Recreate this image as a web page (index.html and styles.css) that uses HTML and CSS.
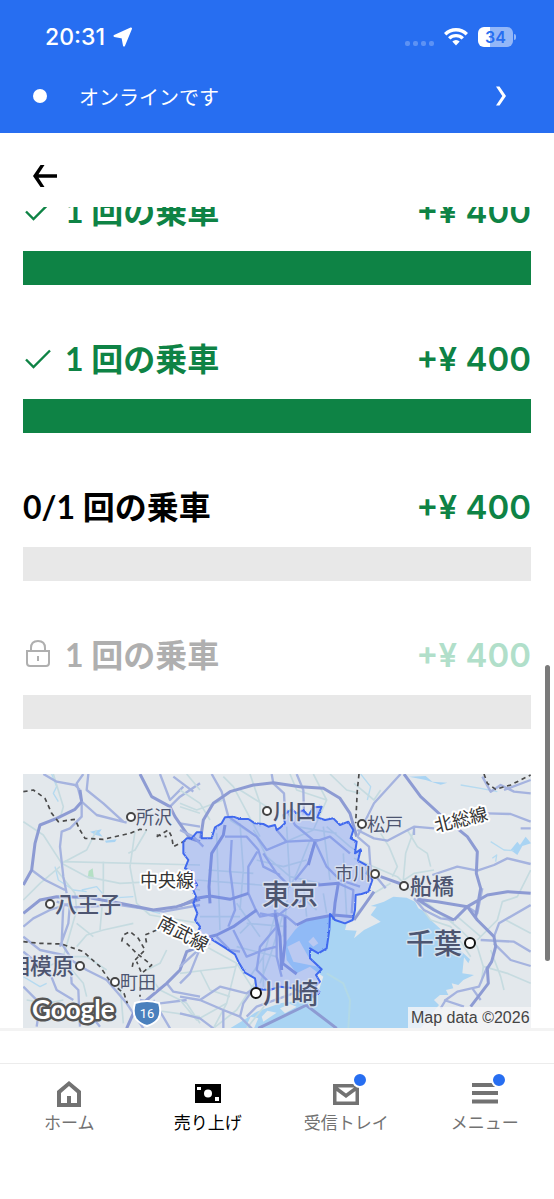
FILE: index.html
```html
<!DOCTYPE html>
<html lang="ja">
<head>
  <meta charset="UTF-8">
  <meta name="viewport" content="width=device-width, initial-scale=1">
  <title>売り上げ</title>
  <link rel="stylesheet" href="styles.css">
</head>
<body>

  <header class="header">
    <div class="status-bar">
      <div class="status-left">
        <span>20:31</span>
        <svg width="20" height="20" viewBox="0 0 20 20"><path d="M18 1.500 L11 18.500 L9.500 10.500 L1.500 9 Z" fill="#fff" stroke="#fff" stroke-width="2" stroke-linejoin="round"/></svg>
      </div>
      <div class="status-right">
        <span class="signal"><i></i><i></i><i></i><i></i></span>
        <svg width="24" height="18" viewBox="0 0 24 18">
          <g fill="none" stroke="#fff" stroke-width="3.400">
            <path d="M1.200 6.200 A15.500 15.500 0 0 1 22.800 6.200"/>
            <path d="M5.200 10.400 A9.800 9.800 0 0 1 18.800 10.400"/>
          </g>
          <path d="M8.300 13.600 A5.300 5.300 0 0 1 15.700 13.600 L12 17.400 Z" fill="#fff"/>
        </svg>
        <span class="battery">34</span>
      </div>
    </div>
    <button type="button" class="online">
      <span class="online-dot"></span>
      <span class="online-text">オンラインです</span>
      <svg width="12" height="20" viewBox="0 0 12 20"><path d="M1 0.500 H4.500 L11 10 L4.500 19.500 H1 L7.300 10 Z" fill="#fff"/></svg>
    </button>
  </header>

  <div class="app-bar">
    <button type="button" class="back-btn" aria-label="戻る">
      <svg width="26" height="26" viewBox="0 0 26 26"><path d="M8.500 2 H12.500 L6.500 11.300 H25 V14.700 H6.500 L12.500 24 H8.500 L1 13 Z"/></svg>
    </button>
  </div>

  <main class="content">
    <ul class="steps">
      <li class="step done">
        <div class="step-row">
          <svg class="step-icon" width="26" height="26" viewBox="0 0 26 26"><path d="M1 13.500 L8.500 21 L25 4.500" fill="none" stroke="currentColor" stroke-width="2.400"/></svg>
          <span class="step-title">1 回の乗車</span>
          <span class="amount">+¥ 400</span>
        </div>
        <div class="bar"></div>
      </li>
      <li class="step done">
        <div class="step-row">
          <svg class="step-icon" width="26" height="26" viewBox="0 0 26 26"><path d="M1 13.500 L8.500 21 L25 4.500" fill="none" stroke="currentColor" stroke-width="2.400"/></svg>
          <span class="step-title">1 回の乗車</span>
          <span class="amount">+¥ 400</span>
        </div>
        <div class="bar"></div>
      </li>
      <li class="step">
        <div class="step-row">
          <span class="step-title">0/1 回の乗車</span>
          <span class="amount">+¥ 400</span>
        </div>
        <div class="bar"></div>
      </li>
      <li class="step locked">
        <div class="step-row">
          <svg class="step-icon" width="26" height="30" viewBox="0 0 26 30">
            <g fill="none" stroke="currentColor" stroke-width="2">
              <path d="M2 11 H24 V23 Q24 26 21 26 H5 Q2 26 2 23 Z"/>
              <path d="M6 11 V8 Q6 1 13 1 Q20 1 20 8 V11"/>
            </g>
            <path d="M12 16 h2 v5 h-2z" fill="currentColor"/>
          </svg>
          <span class="step-title">1 回の乗車</span>
          <span class="amount">+¥ 400</span>
        </div>
        <div class="bar"></div>
      </li>
    </ul>

    <div class="map-wrap">
      <svg class="map" viewBox="0 0 508 254" role="img" aria-label="東京の地図">
        <defs>
          <filter id="rough" x="-5%" y="-5%" width="110%" height="110%">
            <feTurbulence type="fractalNoise" baseFrequency="0.15" numOctaves="2" seed="4"/>
            <feDisplacementMap in="SourceGraphic" scale="6" xChannelSelector="R" yChannelSelector="G"/>
          </filter>
        </defs>
        <rect class="land" width="508" height="254"/>

        <g transform="scale(0.33333)">
          <!-- bay -->
          <g transform="translate(471 -12)">
            <path class="water" d="M150 775 L200 745 230 725 300 700 370 690 410 680 430 620 390 590 350 610 320 570 315 520 345 480 370 455 440 438 500 462 495 480 530 482 522 505 552 480 602 455 572 435 590 410 572 408 612 395 640 380 680 383 705 395 715 415 735 425 752 450 785 480 812 505 832 535 850 550 870 568 865 580 852 562 847 610 882 615 850 630 835 645 815 640 820 655 798 660 805 675 780 675 762 690 777 705 760 725 722 775 Z"/>
            <path class="land" d="M322 530 L358 512 385 560 415 590 340 575 Z M385 515 L400 500 415 520 400 530 Z M200 765 L212 740 235 745 222 775 Z M245 740 L262 722 290 728 250 755 Z M300 715 L330 702 350 710 315 730 Z"/>
            <path class="sea-route" d="M440 610 L490 640 510 690 505 775"/>
          </g>

          <!-- west -->
          <g transform="translate(-9 -12)">
            <path class="lake" d="M210 185 L245 178 238 188 248 200 225 194 214 208 222 192 Z M255 212 L290 208 285 216 258 218 Z"/>
            <path class="river" d="M95 12 L110 50 100 70 115 95 M105 290 L115 330 160 360 200 365 M10 620 L60 650 80 640 M185 360 L230 350 260 385 340 380 M340 410 L420 430"/>
            <path class="park" d="M203 325 L206 303 218 295 222 328 Z"/>
            <path class="road-minor" d="M100 12 L130 110 120 145 M10 155 L70 195 125 280 200 320 300 340 400 335 540 360 M125 280 L200 240 230 180 M130 275 L540 285 M345 185 L330 290 350 400 390 435 540 460 M380 180 L345 240 325 250 M10 390 L60 340 120 290 M170 530 L200 495 250 480 340 460 M250 275 V365 L240 480 M110 300 L165 370 170 420 130 560 M130 560 L200 560 260 600 M300 640 L310 760 M480 110 L540 130 M10 600 L80 590 130 570 L190 640 200 680 M20 690 L80 700 130 690 M390 620 L420 660 500 700 540 760 M440 540 L420 580 380 600 M350 750 L400 720 540 740 M170 460 L220 500"/>
            <path class="road" d="M70 12 L110 35 165 45 180 60 M190 12 L170 40 185 95 230 135 320 158 M205 12 L200 60 250 100 310 155 M185 95 L185 140 150 175 125 185 120 230 130 320 140 370 M35 300 L75 330 135 360 M110 395 L160 412 300 405 430 425 540 405 M10 470 L40 445 90 420 150 400 M130 400 L125 520 150 560 155 640 175 660 180 770 M420 12 L450 90 490 50 M450 110 L480 80 540 40 M460 20 L520 65 M10 500 L60 540 130 555 200 600 260 630 320 700 370 775 M10 545 L90 610 110 660 160 690 M440 640 L460 665 540 680 M150 400 L145 460 120 530 M10 650 L60 700 50 770 M200 720 L240 770 M400 690 L450 775 M480 160 L540 170 M360 690 L420 700 500 690"/>
            <path class="road-major" d="M185 95 L165 118 110 145 60 165 45 220 35 300 10 345 M180 60 L185 95 M10 430 L60 390 110 380 200 382 300 400 400 420 470 410 540 388 M360 12 L395 80 450 110 465 140 510 205 540 215 M540 530 L500 545 480 600 440 640 380 690 340 730 320 775"/>
            <path class="border" d="M10 65 L40 60 75 85 95 130 115 155 165 148 180 180 195 205 250 208 330 190 360 178 380 180 M410 200 L445 180 455 200 460 230 500 210 M410 195 L440 200 M10 515 L60 520 125 522 190 545 240 590 275 640 312 670 322 700 M410 480 L375 495 380 520 M305 515 L310 495 330 485 355 505 375 540 340 575 335 600 M320 520 L350 550 395 585 365 610 350 575 M360 650 V680"/>
          </g>

          <!-- centre -->
          <g transform="translate(471 -12)">
            <path class="road-minor" d="M0 60 L60 100 90 150 M20 12 L60 60 M130 20 L160 50 240 200 M180 60 L260 110 M210 12 L240 100 240 170 M330 12 L350 60 440 90 M400 12 L440 90 400 180 M450 12 L500 60 540 70 M0 100 L50 120 130 90 M150 150 L230 200 260 260 330 320 420 340 M85 300 L220 310 M50 330 L240 345 340 350 M180 160 L190 300 180 420 M110 190 L120 480 M60 440 L180 440 M170 400 L240 500 M220 180 L260 240 400 180 M320 170 L330 340 M350 170 L470 190 M430 170 L450 330 M290 420 L250 560 210 620 M310 430 L270 560 240 640 M325 350 L310 500 M200 460 L320 470 M170 530 L290 560 M250 560 V650 M390 210 L350 310 330 350 M340 360 L410 420 M370 340 L380 440 M430 370 L440 430 M490 250 L500 440 M60 520 L170 580 215 650 M170 580 L140 700 100 775 M0 690 L50 750 140 700 M0 610 L80 600 170 590 M60 600 L90 660 150 680 M230 630 L170 720 100 775 M260 700 L200 775 M440 170 L510 230 540 250 M210 460 L180 490 M230 270 L310 290 380 270"/>
            <path class="road" d="M275 12 L280 40 312 70 315 130 M95 12 L125 65 145 140 230 200 M350 12 L370 60 372 130 M0 180 L40 200 70 230 M135 200 L200 200 235 240 250 290 300 315 M155 210 L150 300 158 360 165 420 145 470 M232 245 L205 290 205 370 225 415 240 440 290 430 M230 200 L260 240 320 215 420 210 M320 215 L290 180 M320 120 L345 165 405 215 385 280 345 330 M405 215 L440 290 480 330 540 350 M405 215 L450 200 510 250 M475 340 L520 360 515 430 M350 465 L320 440 290 430 M285 420 L290 480 290 560 305 620 M240 430 L290 440 340 400 400 380 M290 470 L240 530 230 600 270 640 M160 480 L200 560 250 540 290 530 M0 680 L60 690 130 720 180 740 215 775 M60 690 L120 650 200 670 230 650 M0 590 L60 535 90 520 M60 535 L30 610 0 640 M0 730 L60 745 100 775 M130 720 L130 775 M200 740 L230 710 340 670 M110 500 L150 540 180 545 M250 250 L290 310 330 350 M180 740 L190 700 225 650"/>
            <path class="road-major" d="M62 205 L70 150 100 100 150 65 220 45 280 38 360 50 430 55 480 85 510 130 530 200 M135 165 L130 195 95 250 87 350 90 400 M405 215 L385 285 M50 385 L90 378 150 388 205 370 M50 510 L110 495 160 470 230 420 M415 345 L475 340 465 400 460 450 M350 465 L380 450 460 435 520 440 M315 440 L315 520 308 580 350 612 M285 430 L300 500 305 600 M378 705 L470 775 M235 775 L380 705 M0 408 L50 385"/>
          </g>

          <!-- east -->
          <g transform="translate(993 -12)">
            <path class="lake" d="M165 20 L215 18 235 35 280 38 260 44 215 30 Z M470 240 L490 215 498 225 515 200 531 220 505 228 490 255 Z"/>
            <path class="river" d="M410 215 L450 240 480 242 M320 45 L380 55 430 65 M20 12 L50 50 40 90 M415 265 L428 255 425 275"/>
            <path class="road-minor" d="M0 40 L60 90 80 60 M180 180 L155 250 148 330 M160 180 L190 230 220 250 230 290 M0 265 L130 320 180 370 260 430 320 480 370 530 388 590 382 640 M370 510 L430 450 445 395 490 380 530 300 M390 590 L460 610 530 640 M80 190 L105 230 130 290 115 320 M180 390 L240 420 300 460 M310 440 L380 500 M240 300 L180 310 150 330 M410 540 L440 620 450 660 M455 450 L530 490 M200 410 L230 450 290 470 350 560 M0 440 L60 370 110 340"/>
            <path class="road" d="M140 12 L60 100 45 130 10 200 M10 180 L60 205 100 212 180 170 240 175 M235 315 L310 290 370 302 420 285 460 265 530 282 M10 200 L45 230 50 300 95 355 M180 385 L210 420 260 445 300 450 M380 510 L480 515 530 545 M420 520 L470 570 530 588 M420 500 L435 460 530 405 M400 590 L375 650 310 665 275 690 260 715 M385 20 L410 65 440 45 480 65 530 70 M450 60 L530 30 M400 130 L470 132 530 155 M500 175 H530 M340 410 L370 430 385 355 M270 690 L330 710 M355 655 L380 690 M180 170 L180 195"/>
            <path class="road-major" d="M150 12 L200 80 260 135 340 200 370 245 367 310 380 355 365 440 M80 320 L150 345 M190 388 L250 395 340 410 370 450 420 500 425 530 413 575 400 595 403 640 350 710 M300 450 L340 410 400 375 460 365 530 370 M190 388 L240 420 300 450 M60 365 L0 450"/>
            <path class="border" d="M15 12 L10 60 5 160 M390 12 L400 40 425 58 470 45 530 15"/>
          </g>
        </g>

        <!-- target area -->
        <g transform="translate(157 -4) scale(0.33333)">
          <path class="area" filter="url(#rough)" d="M10 215 L20 205 35 205 50 187 65 187 65 205 95 205 105 172 125 160 135 142 160 140 180 147 205 147 225 160 250 162 265 170 285 165 290 180 302 172 315 160 310 135 335 118 350 130 370 120 385 138 400 112 425 110 412 142 435 150 460 145 480 165 505 155 520 180 512 205 530 215 525 250 542 238 534 272 567 290 560 310 577 330 565 365 545 372 527 375 525 420 518 450 495 460 465 450 450 432 448 480 440 535 415 550 390 535 390 565 425 598 408 615 420 635 405 650 418 665 400 682 390 658 365 668 340 655 300 650 270 660 230 658 225 625 195 608 175 575 165 553 130 530 90 505 50 495 60 470 45 450 52 430 40 400 48 380 40 360 52 345 35 320 35 305 15 295 25 270 10 250 Z"/>
        </g>

        <!-- places -->
        <g class="dots">
          <circle cx="108" cy="43" r="4"/>
          <circle cx="27" cy="130" r="4"/>
          <circle cx="57" cy="192" r="4"/>
          <circle cx="92" cy="208" r="4"/>
          <circle cx="244" cy="37" r="4"/>
          <circle cx="352" cy="100" r="4"/>
          <circle cx="339" cy="50" r="4"/>
          <circle cx="381" cy="112" r="4"/>
          <circle class="big" cx="447" cy="169" r="5"/>
          <circle class="big" cx="233" cy="219" r="5"/>
        </g>
        <g class="place small">
          <text x="113" y="50">所沢</text>
          <text x="97" y="215">町田</text>
          <text x="312" y="106">市川</text>
          <text x="344" y="57">松戸</text>
        </g>
        <g class="place medium">
          <text x="32" y="138">八王子</text>
          <text x="-15" y="200">相模原</text>
          <text x="250" y="45">川口</text>
          <text x="387" y="120">船橋</text>
        </g>
        <g class="place large">
          <text x="239" y="131">東京</text>
          <text x="383" y="180">千葉</text>
          <text x="240" y="230">川崎</text>
        </g>
        <g class="rail">
          <text x="117" y="113">中央線</text>
          <text transform="translate(160 160) rotate(28)" text-anchor="middle" y="6">南武線</text>
          <text transform="translate(438 46) rotate(-14)" text-anchor="middle" y="6">北総線</text>
        </g>

        <path class="shield" d="M112 229 Q124 225 136 229 Q139 239 135 245 Q131 250 124 252 Q117 250 113 245 Q109 239 112 229 Z"/>
        <text class="shield-text" x="124" y="244">16</text>
        <text class="google" x="9" y="245">Google</text>
        <rect class="credit-bg" x="385" y="233" width="123" height="21"/>
        <text class="credit" x="388" y="249">Map data ©2026</text>
      </svg>
    </div>
    <span class="scrollbar"></span>
  </main>

  <nav class="tabs">
    <a href="#" class="tab">
      <span class="tab-icon">
        <svg width="28" height="28" viewBox="0 0 28 28"><path d="M14 1 L26 11 V27 H2 V11 Z M6 13 V23 H12 V16 H16 V23 H22 V13 L14 6 Z" fill="currentColor" fill-rule="evenodd"/></svg>
      </span>
      <span>ホーム</span>
    </a>
    <a href="#" class="tab active">
      <span class="tab-icon">
        <svg width="28" height="28" viewBox="0 0 28 28">
          <path d="M1 4 H27 V23 H1 Z" fill="currentColor"/>
          <path d="M3 7 h4 v3 h-4z M21 17 h4 v4 h-4z" fill="#fff"/>
          <circle cx="14" cy="13.500" r="4" fill="#fff"/>
        </svg>
      </span>
      <span>売り上げ</span>
    </a>
    <a href="#" class="tab">
      <span class="tab-icon">
        <svg width="28" height="28" viewBox="0 0 28 28"><path d="M1 4 H27 V25 H1 Z M4.500 11 V21.500 H23.500 V11 L14 18 Z M6 7.500 L14 13.500 L22 7.500 Z" fill="currentColor" fill-rule="evenodd"/></svg>
        <span class="badge"></span>
      </span>
      <span>受信トレイ</span>
    </a>
    <a href="#" class="tab">
      <span class="tab-icon">
        <svg width="28" height="28" viewBox="0 0 28 28"><path d="M1 3 H27 V7 H1 Z M1 11 H27 V15 H1 Z M1 19.500 H27 V23.500 H1 Z" fill="currentColor"/></svg>
        <span class="badge"></span>
      </span>
      <span>メニュー</span>
    </a>
  </nav>

</body>
</html>
```
FILE: styles.css
```css
* {
  box-sizing: border-box;
}

body {
  margin: 0;
  background-color: #fff;
  color: #000;
  font-family: Inter, "Noto Sans CJK JP", sans-serif;
}

button {
  border: none;
  background: none;
  padding: 0;
  font-family: inherit;
  color: inherit;
  cursor: pointer;
}

svg {
  display: block;
}

/* header */
.header {
  background-color: #276ef1;
  color: #fff;
  padding-bottom: 15px;
}

.status-bar {
  display: flex;
  justify-content: space-between;
  align-items: center;
  height: 74px;
  padding: 0 41px 0 45px;
}

.status-left {
  display: flex;
  align-items: center;
  gap: 8px;
  font-size: 23px;
  font-weight: 500;
}

.status-right {
  display: flex;
  align-items: center;
  gap: 10px;
}

.signal {
  display: flex;
  gap: 3px;
  padding-top: 12px;
}

.signal i {
  width: 5px;
  height: 5px;
  border-radius: 2px;
  background-color: rgba(255, 255, 255, 0.25);
}

.battery {
  position: relative;
  width: 35px;
  height: 20px;
  border-radius: 6px;
  background: linear-gradient(to right, #fff 34%, rgba(255, 255, 255, 0.5) 34%);
  color: #276ef1;
  font-size: 16px;
  font-weight: 600;
  line-height: 20px;
  text-align: center;
}

.battery::after {
  content: "";
  position: absolute;
  right: -3px;
  top: 7px;
  width: 2px;
  height: 6px;
  border-radius: 0 2px 2px 0;
  background-color: rgba(255, 255, 255, 0.5);
}

.online {
  display: flex;
  align-items: center;
  width: 100%;
  height: 44px;
  padding: 0 47px 0 33px;
  font-size: 20px;
  text-align: left;
}

.online-dot {
  width: 14px;
  height: 14px;
  border-radius: 50%;
  background-color: #fff;
}

.online-text {
  flex: 1;
  margin-left: 32px;
  font-family: "Noto Sans CJK JP", sans-serif;
}

.app-bar {
  padding: 30px 32px 18px;
}

.back-btn {
  display: block;
}

/* steps */
.content {
  position: relative;
  overflow: hidden;
  border-bottom: 3px solid #f3f3f3;
}

.steps {
  list-style: none;
  margin: -20px 0 0;
  padding: 0 23px;
}

.step {
  margin-bottom: 50px;
}

.step:last-child {
  margin-bottom: 45px;
}

.step-row {
  display: flex;
  align-items: center;
  height: 48px;
  margin-bottom: 16px;
  font-size: 32px;
}

.step-icon {
  margin: 0 14px 0 2px;
}

.step-title {
  flex: 1;
  font-family: Lato, "Noto Sans CJK JP", sans-serif;
  font-weight: 700;
  line-height: 48px;
}

.amount {
  color: #0e8345;
  font-size: 33px;
  font-weight: 600;
}

.bar {
  height: 34px;
  background-color: #e8e8e8;
}

.done .step-row {
  color: #0e8345;
}

.done .bar {
  background-color: #0e8345;
}

.locked .step-row {
  color: #afafaf;
}

.locked .amount {
  color: #b1dfca;
}

.scrollbar {
  position: absolute;
  top: 458px;
  right: 4px;
  width: 5px;
  height: 296px;
  border-radius: 3px;
  background-color: #7a7a7a;
}

/* map */
.map-wrap {
  padding: 0 23px;
}

.map {
  width: 100%;
  height: auto;
  overflow: hidden;
  font-family: "Noto Sans CJK JP", sans-serif;
}

.land {
  fill: #e3e8ec;
}

.water,
.lake {
  fill: #a9d4f3;
}

.park {
  fill: #b4e0c4;
}

.river,
.sea-route,
.road-minor,
.road,
.road-major,
.border {
  fill: none;
  stroke-linejoin: round;
}

.river {
  stroke: #b5daf0;
  stroke-width: 4;
}

.sea-route {
  stroke: #b3d9e6;
  stroke-width: 6;
}

.road-minor {
  stroke: #c6dbe0;
  stroke-width: 5;
}

.road {
  stroke: #a5b3df;
  stroke-width: 7;
}

.road-major {
  stroke: #8d9bd3;
  stroke-width: 9;
}

.border {
  stroke: #4a4a4a;
  stroke-width: 5;
  stroke-dasharray: 13 11;
}

.area {
  fill: rgba(75, 115, 255, 0.27);
  stroke: #4069ee;
  stroke-width: 6;
  stroke-linejoin: round;
}

.dots circle {
  fill: #fff;
  stroke: #444;
  stroke-width: 2;
}

.dots .big {
  stroke: #111;
}

.place text,
.rail text {
  paint-order: stroke;
  stroke-linejoin: round;
}

.place text {
  fill: #4d5570;
  stroke: rgba(227, 232, 240, 0.7);
  stroke-width: 3px;
}

.small {
  font-size: 18px;
}

.medium {
  font-size: 22px;
  font-weight: 500;
}

.large {
  font-size: 28px;
  font-weight: 500;
}

.rail text {
  font-size: 18px;
  fill: #333;
  stroke: #fff;
  stroke-width: 4px;
}

.shield {
  fill: #4a80bd;
  stroke: #fff;
  stroke-width: 2;
}

.shield-text {
  fill: #fff;
  font-family: Roboto, sans-serif;
  font-size: 13px;
  text-anchor: middle;
}

.google {
  font-family: Lato, sans-serif;
  font-size: 26px;
  font-weight: 700;
  fill: #fff;
  stroke: #555;
  stroke-width: 5px;
  stroke-linejoin: round;
  paint-order: stroke;
}

.credit-bg {
  fill: rgba(245, 245, 247, 0.8);
}

.credit {
  font-family: "Liberation Sans", sans-serif;
  font-size: 16px;
  fill: #444;
}

/* bottom tabs */
.tabs {
  display: flex;
  margin-top: 32px;
  padding: 16px 0 66px;
  border-top: 1px solid #ececec;
}

.tab {
  flex: 1;
  display: flex;
  flex-direction: column;
  align-items: center;
  gap: 4px;
  color: #727272;
  font-family: "Noto Sans CJK JP", sans-serif;
  font-size: 17px;
  line-height: 20px;
  text-decoration: none;
}

.tab.active {
  color: #000;
}

.tab-icon {
  position: relative;
}

.badge {
  position: absolute;
  top: -8px;
  right: -8px;
  width: 16px;
  height: 16px;
  border: 2px solid #fff;
  border-radius: 50%;
  background-color: #276ef1;
}
```
